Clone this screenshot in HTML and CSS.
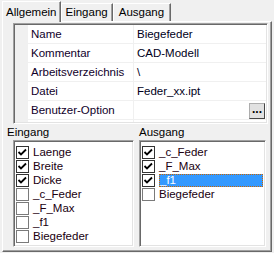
FILE: index.html
```html
<!DOCTYPE html>
<html>
<head>
<meta charset="utf-8">
<link rel="stylesheet" href="styles.css">
</head>
<body>
<div class="tabs">
  <div class="tabbar">
    <div class="tab active">Allgemein</div>
    <div class="tab">Eingang</div>
    <div class="tab wide">Ausgang</div>
  </div>
  <div class="panel">
    <div class="grid">
      <div class="row"><div class="gut"></div><div class="key">Name</div><div class="val">Biegefeder</div></div>
      <div class="row"><div class="gut"></div><div class="key">Kommentar</div><div class="val">CAD-Modell</div></div>
      <div class="row"><div class="gut"></div><div class="key">Arbeitsverzeichnis</div><div class="val">\</div></div>
      <div class="row"><div class="gut"></div><div class="key">Datei</div><div class="val">Feder_xx.ipt</div></div>
      <div class="row"><div class="gut"></div><div class="key">Benutzer-Option</div><div class="val btncell"><span class="dots">...</span></div></div>
      <div class="rest"><div class="gut"></div><div class="key"></div><div class="val"></div></div>
    </div>
    <div class="lists">
      <div class="group first">
        <div class="label">Eingang</div>
        <div class="listbox">
          <div class="item"><span class="cb on"><svg viewBox="0 0 11 11" width="11" height="11"><polyline points="1.5,5 4,7.5 9,2.5" fill="none" stroke="#000" stroke-width="1.8"/></svg></span>Laenge</div>
          <div class="item"><span class="cb on"><svg viewBox="0 0 11 11" width="11" height="11"><polyline points="1.5,5 4,7.5 9,2.5" fill="none" stroke="#000" stroke-width="1.8"/></svg></span>Breite</div>
          <div class="item"><span class="cb on"><svg viewBox="0 0 11 11" width="11" height="11"><polyline points="1.5,5 4,7.5 9,2.5" fill="none" stroke="#000" stroke-width="1.8"/></svg></span>Dicke</div>
          <div class="item"><span class="cb"></span>_c_Feder</div>
          <div class="item"><span class="cb"></span>_F_Max</div>
          <div class="item"><span class="cb"></span>_f1</div>
          <div class="item"><span class="cb"></span>Biegefeder</div>
        </div>
      </div>
      <div class="group">
        <div class="label">Ausgang</div>
        <div class="listbox">
          <div class="item"><span class="cb on"><svg viewBox="0 0 11 11" width="11" height="11"><polyline points="1.5,5 4,7.5 9,2.5" fill="none" stroke="#000" stroke-width="1.8"/></svg></span>_c_Feder</div>
          <div class="item"><span class="cb on"><svg viewBox="0 0 11 11" width="11" height="11"><polyline points="1.5,5 4,7.5 9,2.5" fill="none" stroke="#000" stroke-width="1.8"/></svg></span>_F_Max</div>
          <div class="item"><span class="cb on"><svg viewBox="0 0 11 11" width="11" height="11"><polyline points="1.5,5 4,7.5 9,2.5" fill="none" stroke="#000" stroke-width="1.8"/></svg></span><span class="sel">_f1</span></div>
          <div class="item"><span class="cb"></span>Biegefeder</div>
        </div>
      </div>
    </div>
  </div>
</div>
</body>
</html>
```
FILE: styles.css
```css
html, body {
  margin: 0;
  padding: 0;
  background: #f0f0f0;
  font-family: "Liberation Sans", Arial, sans-serif;
  font-size: 11.5px;
  color: #000;
}
.tabs {
  width: 272px;
  height: 253px;
  padding: 0 0 0 2px;
  box-sizing: border-box;
  display: flex;
  flex-direction: column;
}
.tabbar {
  display: flex;
  height: 21px;
  align-items: flex-end;
  position: relative;
  z-index: 1;
}
.tab {
  height: 18px;
  box-sizing: border-box;
  padding: 0 4px;
  line-height: 17px;
  border-top: 1px solid #fff;
  border-left: 1px solid #fff;
  border-right: 1px solid #696969;
  box-shadow: inset -1px 0 0 #a0a0a0;
}
.tab.wide {
  padding: 0 6px 0 5px;
}
.tab.active {
  height: 21px;
  line-height: 20px;
  margin-bottom: -1px;
  background: #f0f0f0;
  padding: 0 3px 0 3px;
}
.panel {
  flex: 1;
  border-left: 1px solid #fff;
  border-top: 1px solid #fff;
  border-right: 1px solid #696969;
  border-bottom: 1px solid #696969;
  box-shadow: inset -1px -1px 0 #a0a0a0;
  margin-bottom: 1px;
  padding: 1px 5px 4px 10px;
  display: flex;
  flex-direction: column;
}
.grid {
  height: 101px;
  width: 255px;
  box-sizing: border-box;
  border-top: 1px solid #a0a0a0;
  border-left: 1px solid #a0a0a0;
  border-right: 1px solid #fff;
  border-bottom: 1px solid #fff;
  box-shadow: inset 1px 1px 0 #696969, inset -1px -1px 0 #e3e3e3;
  padding: 1px;
  display: flex;
  flex-direction: column;
  background: #fff;
}
.row {
  display: flex;
  height: 19px;
  flex: none;
}
.rest {
  display: flex;
  flex: 1;
}
.gut {
  width: 13px;
  background: #f0f0f0;
  flex: none;
}
.key {
  width: 106px;
  flex: none;
  padding-left: 3px;
  box-sizing: border-box;
  line-height: 18px;
  border-bottom: 1px solid #f0f0f0;
  border-right: 1px solid #f0f0f0;
  background: #fff;
  color: #10002a;
}
.val {
  flex: 1;
  padding-left: 3px;
  line-height: 18px;
  border-bottom: 1px solid #f0f0f0;
  color: #00001a;
}
.rest .key, .rest .val {
  border-bottom: none;
}
.btncell {
  display: flex;
  justify-content: flex-end;
  align-items: flex-end;
  padding-right: 1px;
}
.dots {
  width: 16px;
  height: 16px;
  box-sizing: border-box;
  background: #e1e1e1;
  border: 1px solid #adadad;
  border-right-color: #444;
  border-bottom-color: #444;
  line-height: 10px;
  text-align: center;
  font-weight: bold;
  font-size: 12px;
  color: #000;
}
.lists {
  display: flex;
  gap: 5px;
  margin-top: 1px;
  flex: 1;
  margin-left: -6px;
}
.group {
  flex: 1;
  display: flex;
  flex-direction: column;
}
.label {
  height: 14px;
  line-height: 14px;
  margin-bottom: 1px;
}
.first .listbox {
  margin-left: 6px;
}
.listbox {
  flex: 1;
  background: #fff;
  border-top: 1px solid #a0a0a0;
  border-left: 1px solid #a0a0a0;
  border-right: 1px solid #fff;
  border-bottom: 1px solid #fff;
  box-shadow: inset 1px 1px 0 #696969, inset -1px -1px 0 #e3e3e3;
  padding: 4px 2px 2px 2px;
}
.item {
  height: 14px;
  line-height: 14px;
  display: flex;
  align-items: center;
  color: #200010;
}
.cb {
  width: 13px;
  height: 13px;
  box-sizing: border-box;
  border: 1px solid #7a7a7a;
  background: #fff;
  margin-right: 4px;
  flex: none;
  display: flex;
}
.cb.on {
  border-color: #333;
}
.cb svg {
  display: block;
}
.sel {
  flex: 1;
  background: #3399ff;
  color: #fff;
  height: 13px;
  line-height: 12px;
  outline: 1px dotted #cc6600;
  outline-offset: -1px;
  padding-left: 1px;
}
```
